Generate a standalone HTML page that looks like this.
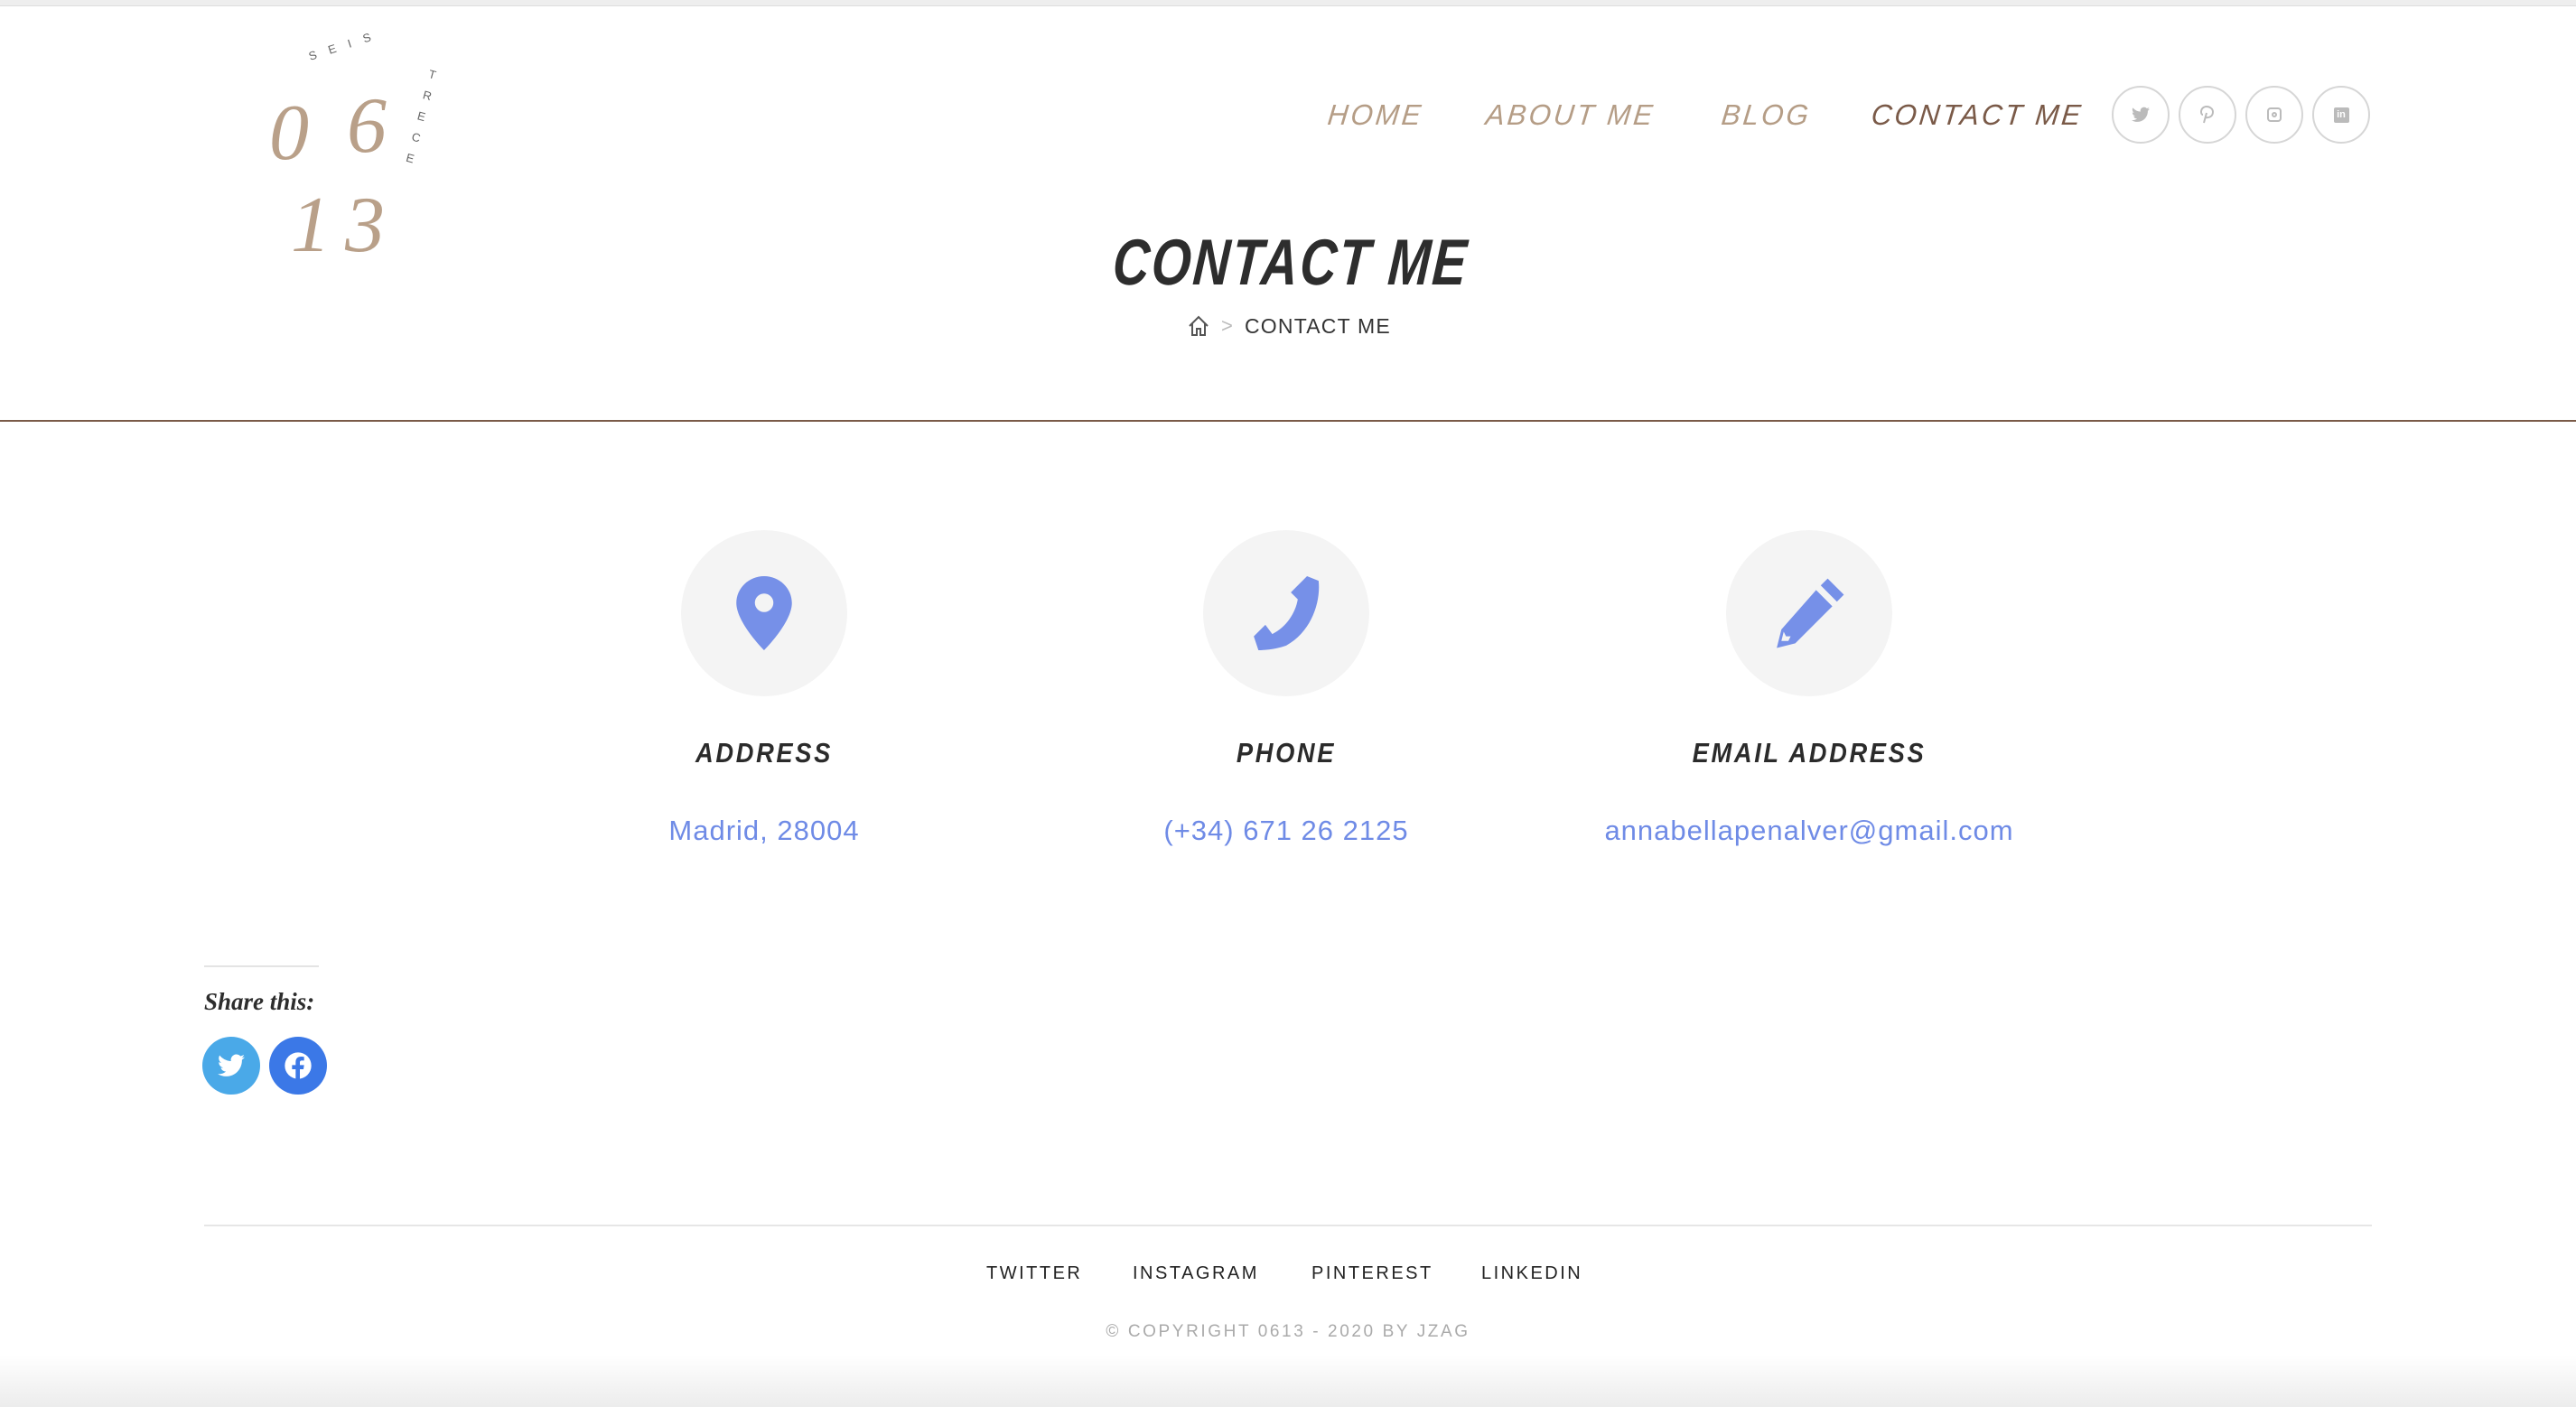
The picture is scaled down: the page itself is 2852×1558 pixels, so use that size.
<!DOCTYPE html>
<html><head><meta charset="utf-8"><style>
*{margin:0;padding:0;box-sizing:border-box}
body{width:2852px;height:1558px;background:#fff;position:relative;overflow:hidden;font-family:"Liberation Sans",sans-serif}
.a{position:absolute}
.scr{font-family:"Liberation Sans",sans-serif;font-style:italic;font-weight:bold;text-transform:uppercase}
.nav{top:109px;font-size:32px;letter-spacing:3px;color:#b59d86;transform-origin:left;transform:skewX(-6deg) scaleX(0.98);font-weight:normal}
.soc{top:95px;width:64px;height:64px;border:2px solid #d6d6d6;border-radius:50%;display:flex;align-items:center;justify-content:center}
.ic{top:587px;width:184px;height:184px;border-radius:50%;background:#f4f4f4;display:flex;align-items:center;justify-content:center}
.h{top:816px;width:500px;text-align:center;font-size:31px;letter-spacing:3px;color:#2b2b2b;transform:scaleX(0.88)}
.v{top:902px;width:600px;text-align:center;font-size:31px;color:#6f8be6;letter-spacing:1px}
.f{top:1399px;font-size:20px;letter-spacing:2.5px;color:#222}
.d{font-family:'Liberation Serif',serif;font-style:italic;font-size:88px;color:#b9a089;line-height:88px}
</style></head><body>
<div class="a" style="left:0;top:0;width:2852px;height:7px;background:#eee;border-bottom:1px solid #ddd"></div>
<!-- logo -->
<div class="a d" style="left:298px;top:104px">0</div>
<div class="a d" style="left:384px;top:96px">6</div>
<div class="a d" style="left:322px;top:206px">1</div>
<div class="a d" style="left:382px;top:206px">3</div>
<div class="a" style="left:340px;top:42px;font-size:13px;color:#666;letter-spacing:14px;transform:rotate(-18deg)">SEIS</div>
<div class="a" style="left:462px;top:70px;font-size:13px;color:#666;line-height:24px;width:14px;transform:rotate(15deg)">T<br>R<br>E<br>C<br>E</div>
<!-- nav -->
<div class="a nav scr" style="left:1470px">Home</div>
<div class="a nav scr" style="left:1645px">About me</div>
<div class="a nav scr" style="left:1906px">Blog</div>
<div class="a nav scr" style="left:2072px;color:#7a5a48">Contact me</div>
<div class="a soc" style="left:2338px"><svg width="20" height="18" viewBox="0 0 24 20"><path fill="#bbb" d="M24 2.4a10 10 0 0 1-2.8.8A5 5 0 0 0 23.3.4a10 10 0 0 1-3.1 1.2A4.9 4.9 0 0 0 11.8 6 14 14 0 0 1 1.7.9a4.9 4.9 0 0 0 1.5 6.6A4.9 4.9 0 0 1 1 6.9a4.9 4.9 0 0 0 3.9 4.9 5 5 0 0 1-2.2.1 4.9 4.9 0 0 0 4.6 3.4A9.9 9.9 0 0 1 0 17.3 14 14 0 0 0 7.5 19.5c9.1 0 14-7.5 14-14v-.6A10 10 0 0 0 24 2.4z"/></svg></div>
<div class="a soc" style="left:2412px"><svg width="16" height="20" viewBox="0 0 16 20"><path d="M7 8 4 19M5 13c6 1 9-2 9-6S10 1 7 1 1 3 1 7c0 2 1 3 2 3" fill="none" stroke="#bbb" stroke-width="2"/></svg></div>
<div class="a soc" style="left:2486px"><div style="width:16px;height:16px;border:2px solid #bbb;border-radius:4px;position:relative"><div style="position:absolute;left:3px;top:3px;width:6px;height:6px;border:2px solid #bbb;border-radius:50%"></div></div></div>
<div class="a soc" style="left:2560px"><div style="width:17px;height:17px;background:#bbb;border-radius:2px;color:#fff;font-size:11px;font-weight:bold;line-height:17px;text-align:center">in</div></div>
<!-- title -->
<div class="a scr" style="left:0;width:2852px;top:250px;text-align:center;font-size:72px;letter-spacing:3px;color:#2d2d2d;padding-left:8px;transform:skewX(-4deg) scaleX(0.78)">Contact me</div>
<div class="a" style="left:1314px;top:349px"><svg width="26" height="24" viewBox="0 0 26 24"><path d="M3 12 13 2l10 10M6 9v13h5v-7h4v7h5V9" fill="none" stroke="#555" stroke-width="2"/></svg></div>
<div class="a" style="left:1352px;top:348px;font-size:22px;color:#bbb">&gt;</div>
<div class="a" style="left:1378px;top:348px;font-size:23px;letter-spacing:1.2px;color:#333">CONTACT ME</div>
<div class="a" style="left:0;top:465px;width:2852px;height:2px;background:#7a5a48"></div>
<!-- icons -->
<div class="a ic" style="left:754px"><svg width="64" height="82" viewBox="0 0 24 32"><path fill="#7690e8" d="M12 0C5.4 0 0 5.2 0 11.6 0 20 12 32 12 32s12-12 12-20.4C24 5.2 18.6 0 12 0zm0 15.5a4 4 0 1 1 0-8 4 4 0 0 1 0 8z"/></svg></div>
<div class="a ic" style="left:1332px"><svg width="82" height="82" viewBox="0 0 32 32"><path fill="#7690e8" d="M25 0l5 2c1 9-3 22-14 28-3 1-7 2-12 2L2 26l5-5 3 4c6-3 10-9 11-15l-3-3z"/></svg></div>
<div class="a ic" style="left:1911px"><svg width="82" height="82" viewBox="0 0 32 32"><path fill="#7690e8" d="M24 1l7 7-3 3-7-7zM19 6l7 7L10 29l-8 2 2-8zM5 24l-1 4 3 0 1-2-2 0z"/></svg></div>
<div class="a h scr" style="left:596px">Address</div>
<div class="a h scr" style="left:1174px">Phone</div>
<div class="a h scr" style="left:1753px">Email address</div>
<div class="a v" style="left:546px">Madrid, 28004</div>
<div class="a v" style="left:1124px">(+34) 671 26 2125</div>
<div class="a v" style="left:1703px">annabellapenalver@gmail.com</div>
<!-- share -->
<div class="a" style="left:226px;top:1069px;width:127px;height:2px;background:#e4e4e4"></div>
<div class="a" style="left:226px;top:1094px;font-family:'Liberation Serif',serif;font-style:italic;font-weight:bold;font-size:27px;color:#2d2d2d">Share this:</div>
<div class="a" style="left:224px;top:1148px;width:64px;height:64px;border-radius:50%;background:#4aa9e8;display:flex;align-items:center;justify-content:center"><svg width="30" height="26" viewBox="0 0 24 20"><path fill="#fff" d="M24 2.4a10 10 0 0 1-2.8.8A5 5 0 0 0 23.3.4a10 10 0 0 1-3.1 1.2A4.9 4.9 0 0 0 11.8 6 14 14 0 0 1 1.7.9a4.9 4.9 0 0 0 1.5 6.6A4.9 4.9 0 0 1 1 6.9a4.9 4.9 0 0 0 3.9 4.9 5 5 0 0 1-2.2.1 4.9 4.9 0 0 0 4.6 3.4A9.9 9.9 0 0 1 0 17.3 14 14 0 0 0 7.5 19.5c9.1 0 14-7.5 14-14v-.6A10 10 0 0 0 24 2.4z"/></svg></div>
<div class="a" style="left:298px;top:1148px;width:64px;height:64px;border-radius:50%;background:#3b78e7;display:flex;align-items:center;justify-content:center"><svg width="32" height="32" viewBox="0 0 24 24"><circle cx="12" cy="12" r="11" fill="#fff"/><path fill="#3b78e7" d="M13.5 24v-9h3l.5-3.5h-3.5V9.5c0-1 .3-1.7 1.8-1.7H17V4.7c-.3 0-1.4-.2-2.6-.2-2.6 0-4.4 1.6-4.4 4.5v2.5H7V15h3v9z"/></svg></div>
<!-- footer -->
<div class="a" style="left:226px;top:1356px;width:2400px;height:2px;background:#e6e6e6"></div>
<div class="a f" style="left:1092px">TWITTER</div>
<div class="a f" style="left:1254px">INSTAGRAM</div>
<div class="a f" style="left:1452px">PINTEREST</div>
<div class="a f" style="left:1640px">LINKEDIN</div>
<div class="a" style="left:0;width:2852px;top:1464px;text-align:center;font-size:19px;letter-spacing:2.6px;color:#aaa">© COPYRIGHT 0613 - 2020 BY JZAG</div>
<div class="a" style="left:0;top:1500px;width:2852px;height:58px;background:linear-gradient(#fff,#ececec)"></div>
</body></html>
